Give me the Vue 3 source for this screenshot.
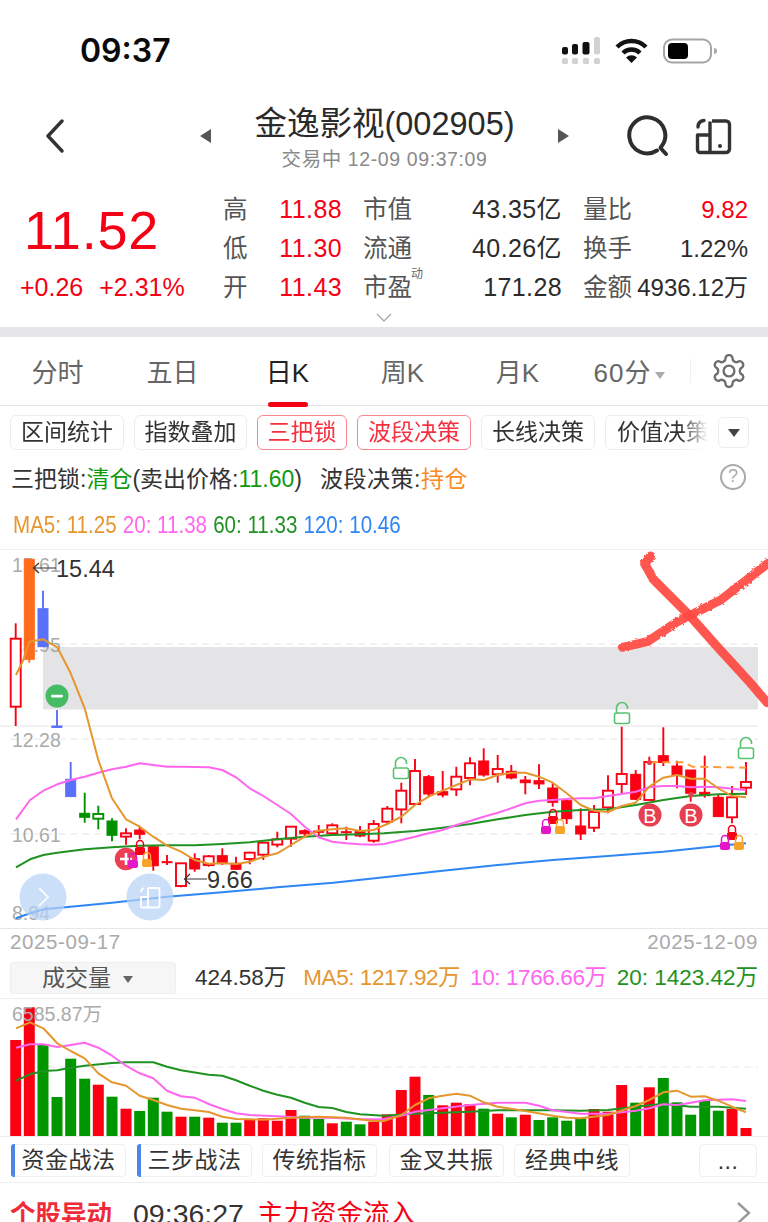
<script setup>
const X = (z) => +(z / 3).toFixed(1)
const Y = (z) => +(z / 3 + 550).toFixed(1)
const VY = (z) => +(z / 3 + 925).toFixed(1)
const pts = (left, right, fy = Y) => {
  const out = []
  for (let i = 0; i < left.length; i += 2) out.push(X(left[i]) + ',' + fy(left[i + 1]))
  for (let i = 0; i < right.length; i += 2) out.push(X(right[i] + 1152) + ',' + fy(right[i + 1]))
  return out.join(' ')
}

const R = '#fb0012', G = '#009000', B = '#5a70fb', O = '#ff6b1c'
// x(zoom), high, low, bodyTop, bodyBottom, colour, filled
const raw = [
  [47,220,528,266,470,R,0],[88,28,338,28,328,O,1],[129,122,290,176,290,B,1],[171,480,530,528,530,B,1],
  [212,636,740,688,740,B,1],[254,728,818,790,802,G,1],[295,767,838,792,806,G,0],[336,805,874,813,856,G,1],
  [378,835,884,850,860,R,0],[419,828,868,840,853,R,1],[460,888,962,890,947,R,1],[501,915,945,935,938,R,1],
  [543,940,1012,940,1008,R,0],[584,910,965,926,957,R,1],[626,915,950,919,945,R,0],[667,895,945,917,937,R,1],
  [708,920,960,940,958,R,1],[749,905,943,908,927,R,0],[790,875,930,878,914,R,0],[832,845,892,868,884,R,0],
  [873,830,890,830,866,R,0],[914,838,858,842,851,R,1],[956,825,862,843,847,R,1],[997,820,855,826,850,R,0],
  [1039,830,870,845,847,R,1],[1080,828,862,845,858,R,1],[1121,810,878,822,872,R,0],
  [1162,768,820,776,815,R,0],[1204,698,820,722,778,R,0],[1245,627,765,663,762,R,0],[1286,675,742,680,732,R,1],
  [1328,663,742,725,735,R,1],[1369,650,738,680,718,R,0],[1410,622,706,640,684,R,0],[1451,595,680,633,675,R,1],
  [1493,615,698,657,673,R,0],[1534,645,688,664,684,R,1],[1576,678,733,690,698,R,1],[1617,643,717,692,702,R,1],
  [1658,700,770,714,757,R,1],[1700,745,822,752,806,R,1],[1742,775,870,828,852,R,1],[1782,765,846,786,833,R,0],
  [1824,676,790,722,772,R,0],[1865,530,730,672,702,R,0],[1907,660,750,673,748,R,1],[1948,620,750,636,750,R,0],
  [1990,532,648,617,637,R,1],[2031,632,715,648,674,R,1],[2072,660,755,660,730,R,1],[2114,617,743,727,737,R,1],
  [2155,733,800,742,800,R,1],[2196,708,820,742,802,R,0],[2238,636,735,696,713,R,0]
]
const candles = raw.map(([x, h, l, t, b, c, f]) => ({
  x: X(x), h: Y(h), l: Y(l), t: Y(t), hgt: Math.max(+((b - t) / 3).toFixed(1), 1), c, f
}))

const volTops = [
  [47,R,345],[88,R,247],[129,G,358],[171,G,516],[212,G,401],[254,G,461],[295,R,479],[336,G,515],[378,R,551],
  [419,G,558],[460,G,518],[501,G,560],[543,R,575],[584,G,575],[626,R,578],[667,G,593],[708,G,593],[749,R,585],
  [790,R,580],[832,R,587],[873,R,555],[914,G,572],[956,G,582],[997,R,595],[1039,G,590],[1080,G,598],[1121,R,590],
  [1162,R,568],[1204,R,495],[1245,R,455],[1286,G,510],[1328,R,541],[1369,R,533],[1410,R,538],[1451,G,551],
  [1493,R,566],[1534,G,577],[1576,R,569],[1617,G,585],[1658,G,577],[1700,G,587],[1742,G,580],[1782,R,552],
  [1824,R,560],[1865,R,480],[1907,G,533],[1948,R,487],[1990,G,459],[2031,G,532],[2072,G,569],[2114,G,525],
  [2155,G,557],[2196,R,552],[2238,R,609]
]
const bars = volTops.map(([x, c, t]) => ({ x: +(X(x) - 5.5).toFixed(1), c, y: VY(t), h: +((633 - t) / 3).toFixed(1) }))

const ma5 = pts([48,375,70,330,88,275,105,272,130,268,172,292,212,370,254,475,295,630,336,745,378,808,419,830,460,860,501,887,543,905,584,930,626,941,667,940,708,942,749,935,790,920,832,910,873,885,914,860,956,842,997,838,1039,835,1080,843,1121,840],
  [0,826,10,822,52,800,93,765,134,740,176,722,217,705,258,688,299,690,341,675,382,668,424,668,465,680,506,698,548,730,590,765,630,782,672,786,713,768,755,758,796,710,838,683,879,675,920,686,962,686,1003,715,1044,738,1086,742])
const ma20 = pts([48,808,90,750,130,722,172,703,212,690,254,680,295,668,336,658,378,650,419,640,460,645,501,650,543,650,626,652,667,660,708,682,749,715,790,738,832,765,873,792,914,830,956,862,997,875,1039,880,1080,883,1121,884],
  [0,882,52,870,93,860,134,850,176,840,217,825,258,813,299,800,341,788,382,775,424,760,465,752,506,750,548,747,590,745,630,745,672,738,713,732,755,725,796,712,838,708,879,708,920,712,962,710,1003,712,1044,716,1086,720])
const ma60 = pts([48,952,90,928,130,915,172,908,254,898,336,892,419,887,501,886,584,886,667,882,749,877,832,868,914,860,997,855,1080,853],
  [0,850,93,843,176,833,258,822,341,808,424,795,506,785,590,780,672,778,755,765,838,750,920,738,1003,733,1086,731])
const ma120 = pts([48,1105,90,1090,130,1078,212,1070,336,1058,501,1040,667,1027,832,1012,1000,998],
  [0,982,176,962,341,945,506,930,672,918,838,905,1003,888,1086,880])
const dashOrange = pts([], [796,637,900,637,925,650,1086,653])
const cross1 = pts([], [800,18,782,42,810,90,920,200,1000,290,1100,400,1150,458])
const cross2 = pts([], [715,292,790,275,880,215,1010,150,1152,40])

const v5 = pts([48,310,90,292,130,310,172,355,212,378,254,400,295,445,336,472,378,482,419,512,460,525,501,540,543,551,584,556,626,561,667,575,708,582,790,584,873,578,956,575,1039,578,1121,588],
  [0,588,52,570,93,540,134,520,176,512,217,506,258,512,299,532,341,545,424,558,506,572,548,578,590,580,672,570,755,543,796,525,838,502,879,497,920,515,962,514,1003,527,1044,545,1086,562], VY)
const v10 = pts([48,368,90,358,130,358,172,366,212,360,254,353,295,368,336,392,378,422,419,445,460,460,501,497,543,514,584,518,626,537,667,552,708,565,749,570,832,574,914,578,997,578,1080,583],
  [0,582,52,572,93,560,176,550,258,540,341,533,424,533,465,542,506,556,590,566,672,566,755,557,796,550,838,538,879,540,920,533,962,526,1044,523,1086,528], VY)
const v20 = pts([48,467,90,448,130,438,172,436,212,428,254,422,336,414,378,412,460,412,501,425,543,436,626,449,667,452,708,466,749,482,790,497,832,509,873,518,914,533,956,546,997,549,1039,561,1080,568],
  [0,572,93,566,176,563,258,560,341,556,424,556,506,556,590,557,672,555,755,545,838,536,920,545,1003,545,1086,551], VY)

const locks = [
  { x: 140, y: 848, c: '#f50014' }, { x: 147, y: 860, c: '#f7a32a' },
  { x: 553, y: 817, c: '#f50014' }, { x: 546, y: 827, c: '#e515c8' }, { x: 560, y: 827, c: '#f7a32a' },
  { x: 732, y: 833, c: '#f50014' }, { x: 725, y: 843, c: '#e515c8' }, { x: 739, y: 843, c: '#f7a32a' }
]
const openLocks = [{ x: 401, y: 768 }, { x: 622, y: 713 }, { x: 746, y: 748 }]
const axis = [
  { t: '15.61', y: 572 }, { t: '13.95', y: 652 }, { t: '12.28', y: 747 }, { t: '10.61', y: 842 }, { t: '8.94', y: 920 }
]
const tabs = [
  { t: '分时' }, { t: '五日' }, { t: '日K', on: true }, { t: '周K' }, { t: '月K' }
]
const chips = [
  { t: '区间统计', w: 114 }, { t: '指数叠加', w: 113 }, { t: '三把锁', w: 90, on: true },
  { t: '波段决策', w: 114, on: true }, { t: '长线决策', w: 114 }, { t: '价值决策', w: 116 }
]
const stats = [
  ['高', '11.88', '市值', '43.35亿', '量比', '9.82'],
  ['低', '11.30', '流通', '40.26亿', '换手', '1.22%'],
  ['开', '11.43', '市盈', '171.28', '金额', '4936.12万']
]
const tools = [
  { t: '资金战法', w: 115, mark: true, gap: 11 }, { t: '三步战法', w: 115, mark: true, gap: 10 },
  { t: '传统指标', w: 115, gap: 12 }, { t: '金叉共振', w: 115, gap: 10 }, { t: '经典中线', w: 116, gap: 69 }
]
</script>

<template>
  <div class="page">
    <header class="status">
      <span class="clock">09:37</span>
      <svg class="status-icons" width="160" height="30" viewBox="560 36 160 30">
        <rect x="562" y="47" width="6" height="7.5" rx="2" fill="#111" />
        <rect x="572" y="44" width="6" height="10.5" rx="2" fill="#111" />
        <rect x="582.5" y="42" width="7" height="12.5" rx="2" fill="#111" />
        <rect x="594" y="37" width="6" height="17.5" rx="2" fill="#d2d2d2" />
        <rect x="562" y="58" width="6" height="6" rx="1.5" fill="#d2d2d2" />
        <rect x="572" y="58" width="6" height="6" rx="1.5" fill="#d2d2d2" />
        <rect x="583" y="58" width="6" height="6" rx="1.5" fill="#d2d2d2" />
        <rect x="594" y="58" width="6" height="6" rx="1.5" fill="#d2d2d2" />
        <g fill="none" stroke="#111" stroke-width="4.4">
          <path d="M617 47 A20.5 20.5 0 0 1 646 47" />
          <path d="M623 53 A12 12 0 0 1 640 53" />
        </g>
        <path d="M631.5 63 L626 57.5 A8 8 0 0 1 637 57.5 Z" fill="#111" />
        <rect x="664" y="39.5" width="47" height="23" rx="8" fill="none" stroke="#a5a5a5" stroke-width="2" />
        <rect x="668" y="43" width="20" height="16" rx="4" fill="#000" />
        <path d="M714 48 a3 3 0 0 1 0 6 Z" fill="#aaa" />
      </svg>
    </header>

    <nav class="nav">
      <div class="nav-left">
        <svg width="20" height="34" viewBox="0 0 20 34"><path d="M17 2 L3 17 L17 32" fill="none" stroke="#333" stroke-width="3.4" stroke-linecap="round" stroke-linejoin="round" /></svg>
      </div>
      <div class="nav-center">
        <i class="tri tri-l"></i>
        <div class="titles">
          <div class="title">金逸影视(002905)</div>
          <div class="sub">交易中 12-09 09:37:09</div>
        </div>
        <i class="tri tri-r"></i>
      </div>
      <div class="nav-right">
        <svg width="44" height="42" viewBox="0 0 44 42">
          <path d="M31 35.5 A18 18 0 1 1 35 32" fill="none" stroke="#2e2e2e" stroke-width="4" stroke-linecap="round" />
          <path d="M34.5 33 L40 39" fill="none" stroke="#2e2e2e" stroke-width="4" stroke-linecap="round" />
        </svg>
        <svg class="split" width="37" height="37" viewBox="0 0 37 37">
          <path d="M17 3 H31 a3.5 3.5 0 0 1 3.5 3.5 V31 a3.5 3.5 0 0 1 -3.5 3.5 H5 a2.5 2.5 0 0 1 -2.5 -2.5 V17 H15 V34 M15 17 V3.5" fill="none" stroke="#333" stroke-width="3.4" stroke-linejoin="round" />
          <path d="M3 9 C3 5 5 3 9 2.5" fill="none" stroke="#333" stroke-width="3.4" stroke-linecap="round" />
          <circle cx="25" cy="28" r="2" fill="#333" />
        </svg>
      </div>
    </nav>

    <section class="quote">
      <div class="price">
        <div class="now">11.52</div>
        <div class="delta"><span>+0.26</span><span>+2.31%</span></div>
      </div>
      <div class="stats">
        <template v-for="(row, i) in stats" :key="i">
          <span class="lab">{{ row[0] }}</span>
          <span class="val red">{{ row[1] }}</span>
          <span class="lab lab-r">{{ row[2] }}<em v-if="i === 2" class="sup">动</em></span>
          <span class="val">{{ row[3] }}</span>
          <span class="lab lab-r">{{ row[4] }}</span>
          <span class="val last" :class="{ red: i === 0 }">{{ row[5] }}</span>
        </template>
      </div>
      <svg class="more" width="16" height="9" viewBox="0 0 16 9"><path d="M1 1 L8 8 L15 1" fill="none" stroke="#aaa" stroke-width="1.4" /></svg>
    </section>

    <div class="band"></div>

    <div class="tabs">
      <div v-for="t in tabs" :key="t.t" class="tab" :class="{ active: t.on }">{{ t.t }}</div>
      <div class="tab tab-min">60分<i class="tab-tri"></i></div>
      <div class="gear">
        <svg width="38" height="38" viewBox="0 0 24 24" fill="none" stroke="#6e6e6e" stroke-width="1.5">
          <path d="M12.22 2h-.44a2 2 0 0 0-2 2v.18a2 2 0 0 1-1 1.73l-.43.25a2 2 0 0 1-2 0l-.15-.08a2 2 0 0 0-2.73.73l-.22.38a2 2 0 0 0 .73 2.73l.15.1a2 2 0 0 1 1 1.72v.51a2 2 0 0 1-1 1.74l-.15.09a2 2 0 0 0-.73 2.73l.22.38a2 2 0 0 0 2.73.73l.15-.08a2 2 0 0 1 2 0l.43.25a2 2 0 0 1 1 1.73V20a2 2 0 0 0 2 2h.44a2 2 0 0 0 2-2v-.18a2 2 0 0 1 1-1.73l.43-.25a2 2 0 0 1 2 0l.15.08a2 2 0 0 0 2.73-.73l.22-.39a2 2 0 0 0-.73-2.73l-.15-.08a2 2 0 0 1-1-1.74v-.5a2 2 0 0 1 1-1.74l.15-.09a2 2 0 0 0 .73-2.73l-.22-.38a2 2 0 0 0-2.73-.73l-.15.08a2 2 0 0 1-2 0l-.43-.25a2 2 0 0 1-1-1.73V4a2 2 0 0 0-2-2z" />
          <circle cx="12" cy="12" r="3.4" />
        </svg>
      </div>
    </div>

    <div class="chips-row">
      <div class="chips">
        <div v-for="c in chips" :key="c.t" class="chip" :class="{ on: c.on }" :style="{ width: c.w + 'px' }">{{ c.t }}</div>
      </div>
      <div class="chip-more"><i></i></div>
    </div>

    <div class="signal">
      <span>三把锁:<b class="g">清仓</b>(卖出价格:<b class="g">11.60</b>)</span>
      <span class="sig2">波段决策:<b class="o">持仓</b></span>
      <span class="help">?</span>
    </div>

    <div class="ma">
      <div class="ma-in">
        <span class="c-o">MA5: 11.25</span>
        <span class="c-p">20: 11.38</span>
        <span class="c-g">60: 11.33</span>
        <span class="c-b">120: 10.46</span>
      </div>
    </div>

    <svg class="kline" width="768" height="380" viewBox="0 549 768 380">
      <defs>
        <filter id="brush" x="-10%" y="-10%" width="120%" height="120%">
          <feTurbulence type="fractalNoise" baseFrequency="0.3" numOctaves="2" seed="4" />
          <feDisplacementMap in="SourceGraphic" scale="3" />
        </filter>
      </defs>
      <line x1="0" x2="768" y1="549.5" y2="549.5" stroke="#eee" />
      <line x1="0" x2="758" y1="726" y2="726" stroke="#eee" stroke-width="1.4" />
      <line x1="0" x2="768" y1="928.5" y2="928.5" stroke="#e8e8e8" />
      <rect x="43" y="647" width="715" height="62.5" fill="#e4e4e6" />
      <g stroke="#e6e6e6" stroke-width="1.2" stroke-dasharray="7 5">
        <line x1="10" x2="758" y1="644" y2="644" />
        <line x1="10" x2="758" y1="739" y2="739" />
        <line x1="10" x2="758" y1="834" y2="834" />
      </g>
      <text v-for="a in axis" :key="a.t" x="12" :y="a.y" class="axis">{{ a.t }}</text>

      <line x1="51.5" x2="62" y1="727" y2="727" stroke="#5a70fb" stroke-width="1.8" />
      <g v-for="(c, i) in candles" :key="i">
        <line :x1="c.x" :x2="c.x" :y1="c.h" :y2="c.l" :stroke="c.c" stroke-width="1.9" />
        <rect :x="c.x - 5" :y="c.t" width="10" :height="c.hgt" :fill="c.f ? c.c : '#fff'" :stroke="c.c" :stroke-width="c.f ? 1 : 1.9" />
      </g>

      <polyline :points="ma120" class="ln" stroke="#2e86f5" />
      <polyline :points="ma60" class="ln" stroke="#1f9222" />
      <polyline :points="ma20" class="ln" stroke="#ff66f0" />
      <polyline :points="ma5" class="ln" stroke="#e5962e" />
      <polyline :points="dashOrange" class="ln" stroke="#ff9a3a" stroke-dasharray="8 5" />

      <circle cx="57" cy="696" r="11.5" fill="#45bb63" />
      <rect x="51" y="694.8" width="12" height="2.6" rx="1.3" fill="#fff" />
      <circle cx="126" cy="859" r="11.2" fill="#ec3f53" />
      <path d="M120 859 H132 M126 853 V865" stroke="#fff" stroke-width="2.6" />
      <path d="M129.5 860 v-3 a3.5 3.5 0 0 1 7 0 v3" fill="none" stroke="#e515c8" stroke-width="1.5" />
      <rect x="128" y="860" width="10" height="8" rx="2" fill="#e515c8" />

      <g v-for="(l, i) in locks" :key="'l' + i">
        <path :d="`M${l.x - 3.5} ${l.y - 1} v-3 a3.5 3.5 0 0 1 7 0 v3`" fill="none" :stroke="l.c" stroke-width="1.5" />
        <rect :x="l.x - 5" :y="l.y - 1" width="10" height="8" rx="2" :fill="l.c" />
      </g>
      <g v-for="(l, i) in openLocks" :key="'o' + i" fill="none" stroke="#57c272" stroke-width="1.6">
        <path :d="`M${l.x - 5.5} ${l.y} v-5 a5.5 5.5 0 0 1 11 0 v1`" />
        <rect :x="l.x - 7.5" :y="l.y" width="15" height="10.5" rx="2" fill="#fff" />
      </g>

      <g v-for="bx in [650, 691]" :key="bx">
        <circle :cx="bx" cy="815" r="11.5" fill="#e83f50" />
        <text :x="bx" y="822.5" text-anchor="middle" class="bt">B</text>
      </g>
      <circle cx="649.5" cy="762.5" r="2.6" fill="#e83f50" />
      <circle cx="691" cy="794.5" r="2.6" fill="#e83f50" />

      <path d="M39 563 L33.5 568 L39 573 M33.5 568 H56" fill="none" stroke="#333" stroke-width="1.2" />
      <text x="56" y="577" class="mk">15.44</text>
      <path d="M190 874 L184.5 879 L190 884 M184.5 879 H207" fill="none" stroke="#333" stroke-width="1.2" />
      <text x="207" y="888" class="mk">9.66</text>

      <polyline :points="cross1" class="cross" filter="url(#brush)" />
      <polyline :points="cross2" class="cross" filter="url(#brush)" />

      <circle cx="43" cy="897" r="23.5" fill="#b8d2f6" fill-opacity=".72" />
      <path d="M39 888 L48 897 L39 906" fill="none" stroke="#fff" stroke-opacity=".8" stroke-width="2" />
      <circle cx="150" cy="897" r="23.5" fill="#b8d2f6" fill-opacity=".72" />
      <g fill="none" stroke="#fff" stroke-width="1.8">
        <path d="M148 888 H158 a1.5 1.5 0 0 1 1.5 1.5 V906 a1.5 1.5 0 0 1 -1.5 1.5 H142 a1 1 0 0 1 -1 -1 V897 H148 V907.5 M148 897 V888" />
        <path d="M141 892 C141 890 142 888.5 144 888" />
      </g>
    </svg>

    <div class="dates"><span>2025-09-17</span><span>2025-12-09</span></div>

    <div class="vol-head">
      <div class="vol-sel">成交量<i></i></div>
      <div class="vol-vals">
        <span class="now-v">424.58万</span>
        <span class="c-o v-a">MA5: 1217.92万</span>
        <span class="c-p v-b">10: 1766.66万</span>
        <span class="c-g">20: 1423.42万</span>
      </div>
    </div>

    <svg class="vol" width="768" height="139" viewBox="0 998 768 139">
      <line x1="0" x2="768" y1="998.5" y2="998.5" stroke="#eee" />
      <line x1="12" x2="758" y1="1067" y2="1067" stroke="#e6e6e6" stroke-width="1.2" stroke-dasharray="7 5" />
      <rect v-for="(b, i) in bars" :key="i" :x="b.x" :y="b.y" width="11" :height="b.h" :fill="b.c === G ? '#009600' : '#fb0012'" />
      <polyline :points="v20" class="ln" stroke="#1f9222" />
      <polyline :points="v10" class="ln" stroke="#ff66f0" />
      <polyline :points="v5" class="ln" stroke="#e5962e" />
      <text x="12" y="1021" class="axis-v">6585.87万</text>
      <line x1="0" x2="768" y1="1136.5" y2="1136.5" stroke="#eee" />
    </svg>

    <div class="tools">
      <div v-for="t in tools" :key="t.t" class="tool" :class="{ mark: t.mark }" :style="{ width: t.w + 'px', marginRight: t.gap + 'px' }">{{ t.t }}</div>
      <div class="tool tool-more">...</div>
    </div>

    <div class="alert">
      <span class="alert-tag">个股异动</span>
      <span class="alert-time">09:36:27</span>
      <span class="alert-msg">主力资金流入</span>
      <svg class="alert-go" width="15" height="24" viewBox="0 0 15 24"><path d="M2 2 L13 12 L2 22" fill="none" stroke="#999" stroke-width="2.4" /></svg>
    </div>
  </div>
</template>

<style scoped>
.page {
  width: 768px;
  height: 1222px;
  overflow: hidden;
  background: #fff;
  font-family: "Liberation Sans", "Noto Sans CJK SC", sans-serif;
  color: #333;
}
.status { height: 100px; display: flex; align-items: flex-start; }
.clock {
  font-family: Inter, "Liberation Sans", sans-serif;
  font-weight: 600;
  font-size: 32px;
  line-height: 38px;
  margin: 32px 0 0 80px;
  color: #0a0a0a;
}
.status-icons { margin: 36px 48px 0 auto; }

.nav { height: 78px; display: grid; grid-template-columns: 200px 369px 199px; }
.nav-left { padding: 19px 0 0 45px; }
.nav-center { display: flex; justify-content: space-between; align-items: flex-start; }
.titles { text-align: center; flex: 1; }
.title { font-size: 32.5px; line-height: 48px; color: #2a2a2a; white-space: nowrap; }
.sub { font-size: 19.5px; line-height: 22px; color: #8a8a8a; letter-spacing: .6px; white-space: nowrap; }
.tri { display: block; width: 0; height: 0; border-top: 7px solid transparent; border-bottom: 7px solid transparent; margin-top: 29px; }
.tri-l { border-right: 11px solid #555; }
.tri-r { border-left: 11px solid #555; }
.nav-right { display: flex; align-items: flex-start; padding: 15px 0 0 57px; }
.split { margin: 3px 0 0 25px; }

.quote { height: 149px; position: relative; display: flex; }
.price { width: 223px; flex: none; }
.now { font-size: 54px; line-height: 60px; color: #f50014; margin: 22px 0 0 24px; letter-spacing: .8px; }
.delta { display: flex; gap: 16px; margin: 12px 0 0 20px; font-size: 25px; line-height: 30px; color: #f50014; }
.stats {
  display: grid;
  grid-template-columns: 52px 67px 70px 150px 70px 116px;
  grid-auto-rows: 39px;
  padding-top: 12px;
  align-items: center;
}
.lab { font-size: 24.5px; line-height: 39px; color: #555; position: relative; white-space: nowrap; }
.lab-r { justify-self: end; }
.val { font-size: 25px; line-height: 39px; text-align: right; color: #2b2b2b; white-space: nowrap; letter-spacing: .4px; }
.val.last { font-size: 24px; letter-spacing: 0; }
.val.red { color: #f50014; }
.sup { position: absolute; right: -11px; top: -1px; font-size: 12px; line-height: 14px; font-style: normal; color: #666; }
.more { position: absolute; left: 376px; top: 135px; }

.band { height: 10px; background: #e6e6e8; }

.tabs { height: 69px; display: flex; border-bottom: 1px solid #e5e5e5; box-sizing: border-box; }
.tab {
  width: 115px; text-align: center; font-size: 26px; line-height: 72px; color: #666; position: relative; white-space: nowrap;
}
.tab.active { color: #222; }
.tab.active::after {
  content: ""; position: absolute; left: 38px; width: 40px; height: 5px; bottom: -2px; background: #f50014; border-radius: 3px;
}
.tab-min { letter-spacing: 1px; padding-right: 6px; width: 109px; }
.tab-tri {
  display: inline-block; width: 0; height: 0; margin-left: 4px; vertical-align: 3px;
  border-left: 5px solid transparent; border-right: 5px solid transparent; border-top: 7px solid #aaa;
}
.gear { flex: 1; display: flex; align-items: center; justify-content: center; padding-bottom: 1px; position: relative; }
.gear::before { content: ""; position: absolute; left: 0; top: 22px; height: 24px; width: 1px; background: #f0f0f0; }

.chips-row { height: 44px; position: relative; padding: 9px 0 0 10px; box-sizing: border-box; display: flex; }
.chips {
  width: 698px; display: flex; gap: 10px; overflow: hidden; flex: none;
  -webkit-mask-image: linear-gradient(to right, #000 670px, transparent 698px);
  mask-image: linear-gradient(to right, #000 670px, transparent 698px);
}
.chip {
  flex: none; height: 35px; box-sizing: border-box; border: 1px solid #ececec; border-radius: 6px;
  font-size: 23px; line-height: 33px; text-align: center; color: #333; white-space: nowrap;
}
.chip.on { border-color: #f7868f; color: #f7303f; }
.chip-more {
  width: 31px; height: 31px; margin: 2px 0 0 10px; box-sizing: border-box; border: 1px solid #ececec; border-radius: 5px;
  display: flex; align-items: center; justify-content: center; flex: none;
}
.chip-more i { width: 0; height: 0; border-left: 6px solid transparent; border-right: 6px solid transparent; border-top: 8px solid #444; }

.signal { height: 50px; display: flex; align-items: center; padding-left: 11px; font-size: 23px; color: #333; position: relative; white-space: nowrap; margin-top: 2px; }
.signal b { font-weight: 400; }
.g { color: #0d9a0d; }
.o { color: #fb8a22; }
.sig2 { margin-left: 18px; letter-spacing: .5px; }
.help {
  position: absolute; left: 720px; top: 12px; width: 26px; height: 26px; box-sizing: border-box;
  border: 2.5px solid #aaa; border-radius: 50%; font-size: 18px; line-height: 21px; text-align: center; color: #aaa;
}

.ma { height: 47px; display: flex; align-items: center; padding-left: 13px; font-size: 23.5px; white-space: nowrap; }
.ma-in { display: flex; gap: 7px; transform: scaleX(.875); transform-origin: left center; }
.c-o { color: #e5962e; }
.c-p { color: #ff66f0; }
.c-g { color: #1f9222; }
.c-b { color: #2e86f5; }

.kline, .vol { display: block; }
.axis { font-size: 19.5px; fill: #aaa; font-family: "Liberation Sans", sans-serif; }
.axis-v { font-size: 19.5px; fill: #aaa; font-family: "Liberation Sans", "Noto Sans CJK SC", sans-serif; }
.mk { font-size: 23.5px; fill: #333; font-family: "Liberation Sans", sans-serif; }
.bt { font-size: 20px; fill: #fff; font-family: "Liberation Sans", sans-serif; }
.ln { fill: none; stroke-width: 2; stroke-linejoin: round; }
.cross { fill: none; stroke: #ff4a42; stroke-width: 9; stroke-linecap: round; stroke-linejoin: round; opacity: .92; }

.dates {
  height: 33px; display: flex; justify-content: space-between; padding: 0 10px; font-size: 20.5px; line-height: 26px; color: #aaa; letter-spacing: .6px;
}
.vol-head { height: 36px; display: flex; padding-left: 10px; box-sizing: border-box; }
.vol-sel {
  width: 166px; height: 32px; box-sizing: border-box; background: #f6f6f6; border: 1px solid #eee; border-radius: 3px; flex: none;
  font-size: 23px; line-height: 30px; padding-left: 31px; color: #555;
}
.vol-sel i { display: inline-block; width: 0; height: 0; margin-left: 12px; vertical-align: 3px; border-left: 5.5px solid transparent; border-right: 5.5px solid transparent; border-top: 7px solid #666; }
.vol-vals { display: flex; margin-left: 19px; gap: 10px; font-size: 22.5px; line-height: 32px; white-space: nowrap; }
.now-v { color: #333; margin-right: 7px; }
.v-a { letter-spacing: -.45px; }
.v-b { letter-spacing: -.4px; }

.tools { height: 46px; box-sizing: border-box; display: flex; padding: 7px 0 0 11px; border-bottom: 1px solid #eee; }
.tool {
  flex: none; height: 33px; box-sizing: border-box; border: 1px solid #efefef; border-radius: 4px; font-size: 23px; line-height: 30px;
  text-align: center; color: #333; letter-spacing: .5px; position: relative;
}
.tool.mark::before { content: ""; position: absolute; left: -1px; top: -1px; bottom: -1px; width: 3.5px; background: #4f86e6; border-radius: 3px 0 0 3px; }
.tool-more { width: 58px; line-height: 33px; }

.alert { height: 40px; display: flex; align-items: flex-start; padding: 16px 0 0 10px; font-size: 25.5px; line-height: 30px; white-space: nowrap; position: relative; }
.alert-tag { color: #f02a38; font-weight: 700; }
.alert-time { margin-left: 21px; font-size: 28.5px; color: #333; }
.alert-msg { margin-left: 13px; font-size: 26.5px; color: #f50014; }
.alert-go { position: absolute; left: 736px; top: 18px; }
</style>
